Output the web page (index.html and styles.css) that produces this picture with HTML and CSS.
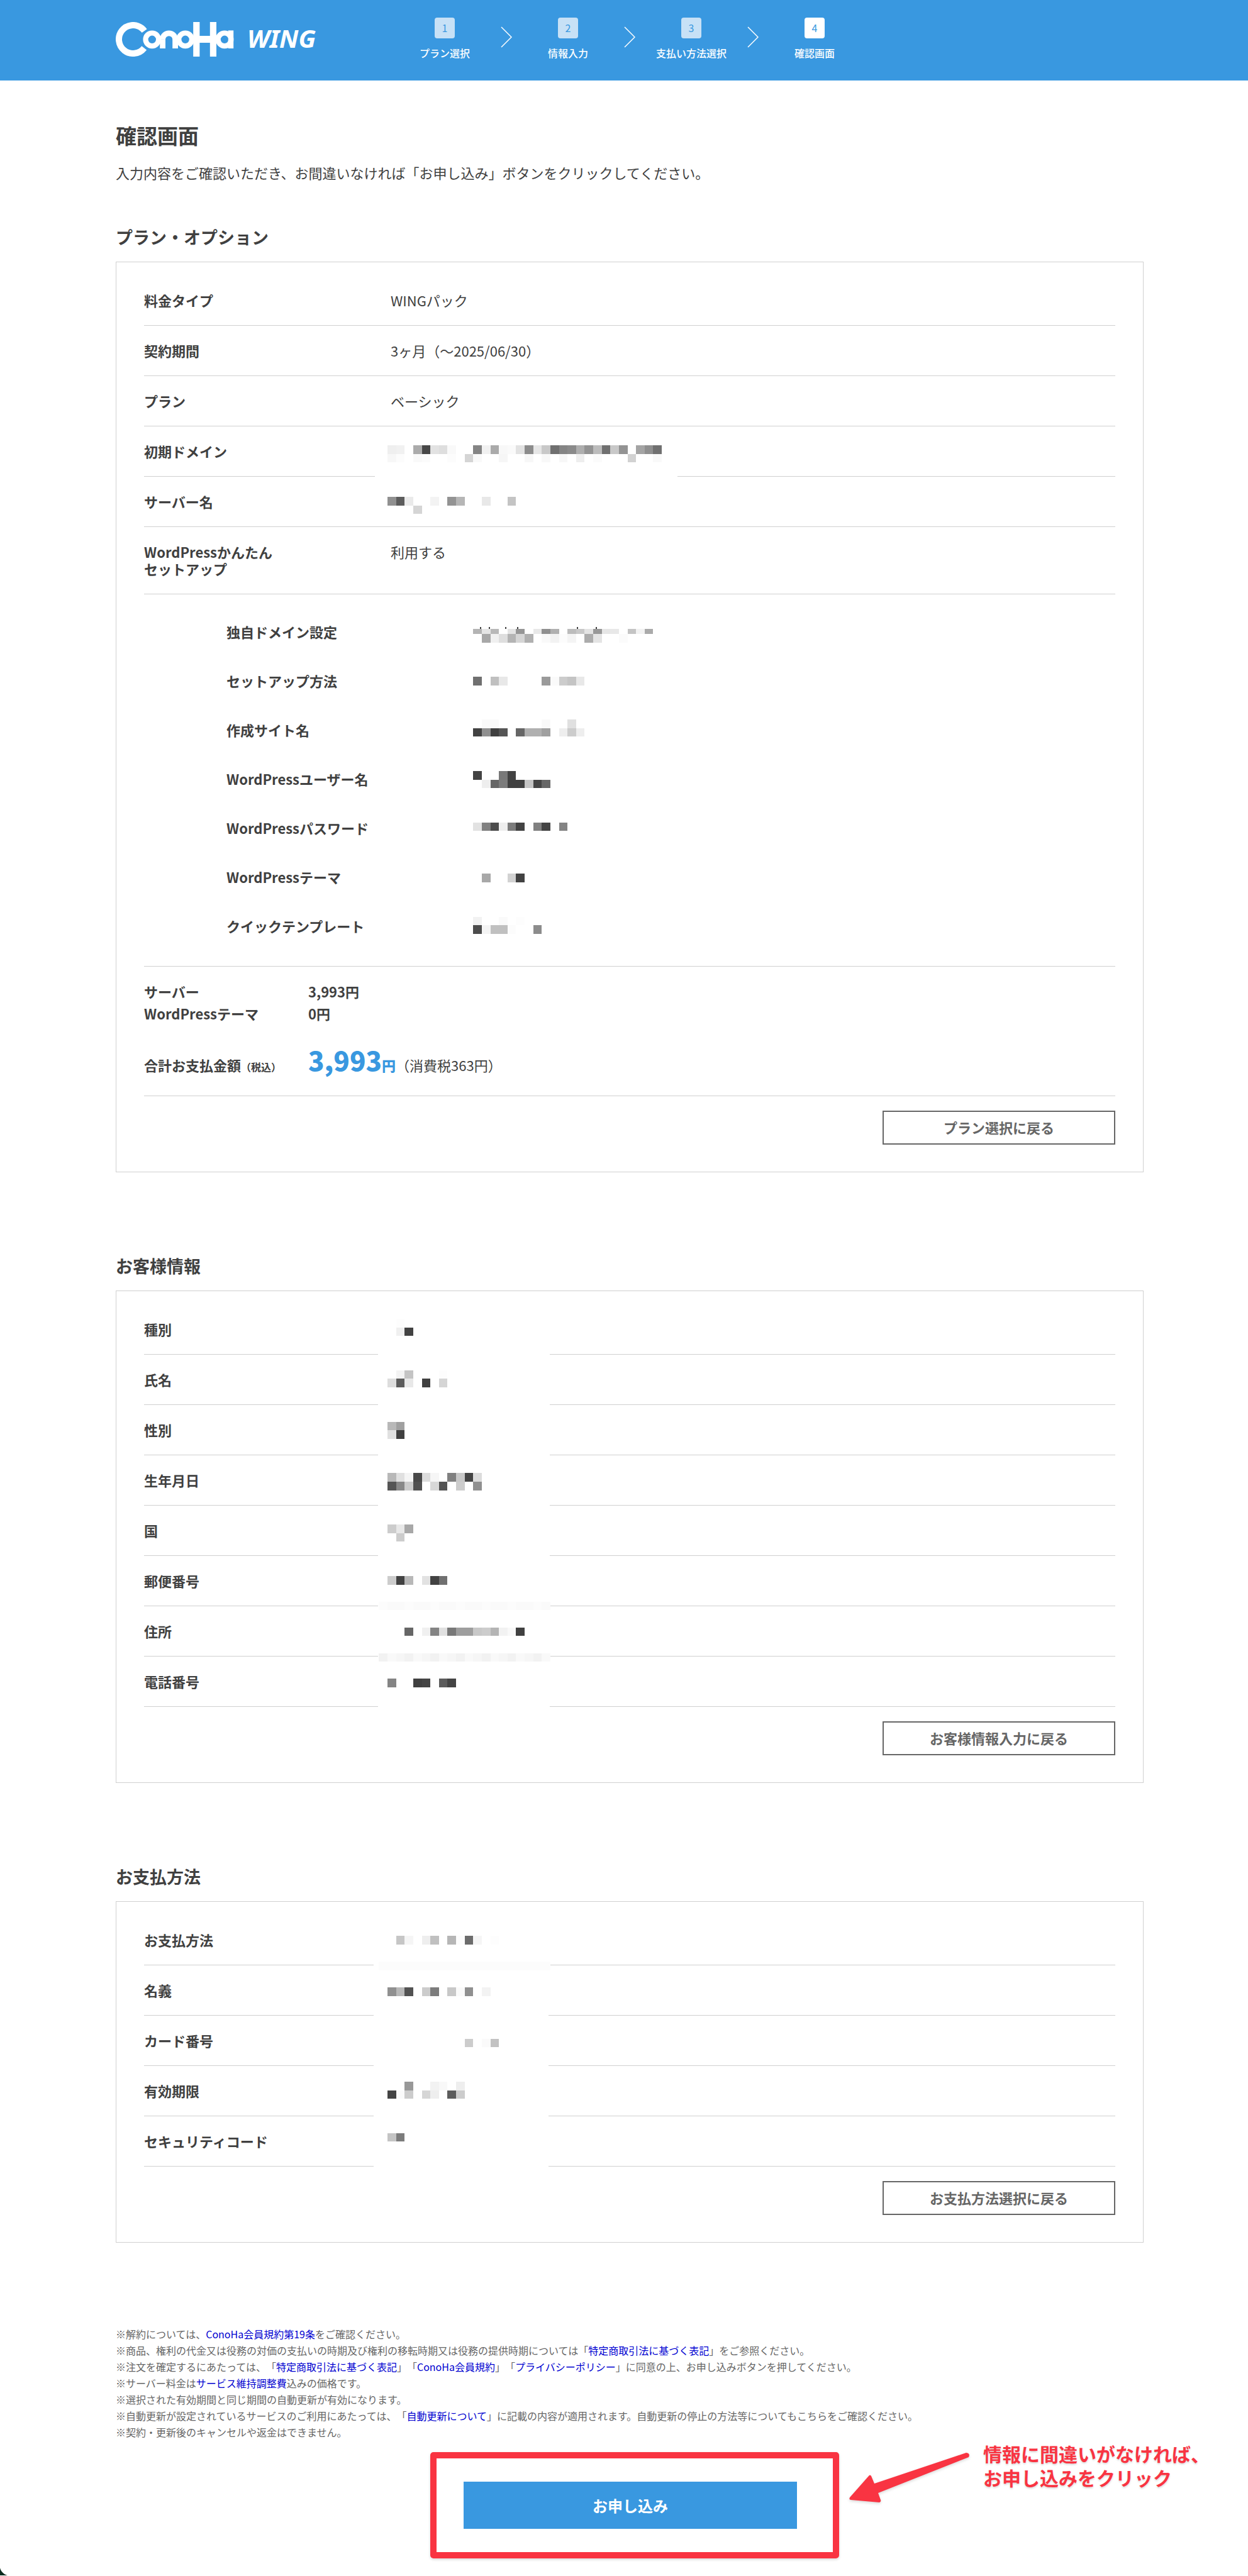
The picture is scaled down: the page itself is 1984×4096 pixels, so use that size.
FILE: index.html
```
<!DOCTYPE html>
<html lang="ja">
  <head>
    <meta charset="utf-8" />
    <title>確認画面 | ConoHa WING</title>
    <meta name="viewport" content="width=device-width, initial-scale=1" />
    <link rel="stylesheet" href="styles.css">
  </head>
  <body>
    <header class="header">
      <div class="logo">
        <svg class="logo-mark" width="188" height="55" viewBox="0 0 188 55" role="img" aria-label="ConoHa">
          <g fill="none" stroke="#fff">
            <circle cx="27.5" cy="27.5" r="22.5" stroke-width="10" stroke-dasharray="111.5 29.9" transform="rotate(38 27.5 27.5)" />
            <circle cx="57.8" cy="27.8" r="10.3" stroke-width="8.2" />
            <circle cx="84.6" cy="27.8" r="10" stroke-width="8.8" stroke-dasharray="31.4 31.4" transform="rotate(180 84.6 27.8)" />
            <circle cx="110.6" cy="27.8" r="10.3" stroke-width="8.2" />
            <circle cx="173" cy="27.8" r="10.3" stroke-width="8.2" />
          </g>
          <g fill="#fff">
            <rect x="70.2" y="27.5" width="8.8" height="14.5" />
            <rect x="90.2" y="27.5" width="8.8" height="14.5" />
            <rect x="123.2" y="0" width="10.2" height="55" />
            <rect x="149.8" y="0" width="10.2" height="55" />
            <rect x="133" y="22" width="17" height="11" />
            <rect x="178.8" y="13.4" width="8.4" height="28.6" />
          </g>
        </svg>
        <span class="logo-text">WING</span>
      </div>
      <ol class="steps">
        <li class="step"><span class="step-num">1</span>プラン選択</li>
        <li class="arrow"><svg width="18" height="34" viewBox="0 0 18 34"><path d="M1 1 L17 17 L1 33" /></svg></li>
        <li class="step"><span class="step-num">2</span>情報入力</li>
        <li class="arrow"><svg width="18" height="34" viewBox="0 0 18 34"><path d="M1 1 L17 17 L1 33" /></svg></li>
        <li class="step"><span class="step-num">3</span>支払い方法選択</li>
        <li class="arrow"><svg width="18" height="34" viewBox="0 0 18 34"><path d="M1 1 L17 17 L1 33" /></svg></li>
        <li class="step active"><span class="step-num">4</span>確認画面</li>
      </ol>
    </header>

    <main class="main">
      <h1>確認画面</h1>
      <p class="lead">入力内容をご確認いただき、お間違いなければ「お申し込み」ボタンをクリックしてください。</p>

      <h2 class="first">プラン・オプション</h2>
      <section class="card">
        <dl class="list">
          <div class="row"><dt>料金タイプ</dt><dd>WINGパック</dd></div>
          <div class="row"><dt>契約期間</dt><dd>3ヶ月（〜2025/06/30）</dd></div>
          <div class="row"><dt>プラン</dt><dd>ベーシック</dd></div>
          <div class="row"><dt>初期ドメイン</dt><dd></dd></div>
          <div class="row"><dt>サーバー名</dt><dd></dd></div>
          <div class="row"><dt>WordPressかんたん<br />セットアップ</dt><dd>利用する</dd></div>
        </dl>
        <dl class="sublist">
          <div class="subrow"><dt>独自ドメイン設定</dt><dd></dd></div>
          <div class="subrow"><dt>セットアップ方法</dt><dd></dd></div>
          <div class="subrow"><dt>作成サイト名</dt><dd></dd></div>
          <div class="subrow"><dt>WordPressユーザー名</dt><dd></dd></div>
          <div class="subrow"><dt>WordPressパスワード</dt><dd></dd></div>
          <div class="subrow"><dt>WordPressテーマ</dt><dd></dd></div>
          <div class="subrow"><dt>クイックテンプレート</dt><dd></dd></div>
        </dl>
        <dl class="prices">
          <div class="price"><dt>サーバー</dt><dd>3,993円</dd></div>
          <div class="price"><dt>WordPressテーマ</dt><dd>0円</dd></div>
          <div class="price total">
            <dt>合計お支払金額<small>（税込）</small></dt>
            <dd><strong>3,993</strong><b>円</b><span>（消費税363円）</span></dd>
          </div>
        </dl>
        <button type="button" class="back">プラン選択に戻る</button>
        <svg class="mosaic mosaic-plan" viewBox="0 0 32 57" id="mosaicPlan"></svg>
      </section>

      <h2>お客様情報</h2>
      <section class="card">
        <dl class="list">
          <div class="row"><dt>種別</dt><dd></dd></div>
          <div class="row"><dt>氏名</dt><dd></dd></div>
          <div class="row"><dt>性別</dt><dd></dd></div>
          <div class="row"><dt>生年月日</dt><dd></dd></div>
          <div class="row"><dt>国</dt><dd></dd></div>
          <div class="row"><dt>郵便番号</dt><dd></dd></div>
          <div class="row"><dt>住所</dt><dd></dd></div>
          <div class="row"><dt>電話番号</dt><dd></dd></div>
        </dl>
        <button type="button" class="back">お客様情報入力に戻る</button>
        <svg class="mosaic mosaic-customer" viewBox="0 0 19 46" id="mosaicCustomer"></svg>
      </section>

      <h2>お支払方法</h2>
      <section class="card">
        <dl class="list">
          <div class="row"><dt>お支払方法</dt><dd></dd></div>
          <div class="row"><dt>名義</dt><dd></dd></div>
          <div class="row"><dt>カード番号</dt><dd></dd></div>
          <div class="row"><dt>有効期限</dt><dd></dd></div>
          <div class="row"><dt>セキュリティコード</dt><dd></dd></div>
        </dl>
        <button type="button" class="back">お支払方法選択に戻る</button>
        <svg class="mosaic mosaic-payment" viewBox="0 0 19 28" id="mosaicPayment"></svg>
      </section>

      <ul class="notes">
        <li>※解約については、<a href="#">ConoHa会員規約第19条</a>をご確認ください。</li>
        <li>※商品、権利の代金又は役務の対価の支払いの時期及び権利の移転時期又は役務の提供時期については「<a href="#">特定商取引法に基づく表記</a>」をご参照ください。</li>
        <li>※注文を確定するにあたっては、「<a href="#">特定商取引法に基づく表記</a>」「<a href="#">ConoHa会員規約</a>」「<a href="#">プライバシーポリシー</a>」に同意の上、お申し込みボタンを押してください。</li>
        <li>※サーバー料金は<a href="#">サービス維持調整費</a>込みの価格です。</li>
        <li>※選択された有効期間と同じ期間の自動更新が有効になります。</li>
        <li>※自動更新が設定されているサービスのご利用にあたっては、「<a href="#">自動更新について</a>」に記載の内容が適用されます。自動更新の停止の方法等についてもこちらをご確認ください。</li>
        <li>※契約・更新後のキャンセルや返金はできません。</li>
      </ul>

      <div class="submit-area">
        <div class="highlight">
          <button type="submit" class="submit">お申し込み</button>
          <div class="callout">
            <svg width="194" height="82" viewBox="0 0 194 82">
              <path d="M187 2 L41 51 L36 39 Q34 36 32 39 L2 73 Q0 77 4 77 L49 81 Q52 80 51 77 L47 66 L191 9 Q194 3 187 2 Z" />
            </svg>
            <p>情報に間違いがなければ、<br />お申し込みをクリック</p>
          </div>
        </div>
      </div>
    </main>

    <script>
      // [row, column, gray levels], "--" leaves the cell empty
      const plan = [
        [0, 0, "ef f1 -- ab 47 e2 de f9 -- -- 84 f1 aa f8 fa e2 8c e6 c8 70 84 8a ae 93 bc 70 c8 93 -- a4 8f 70"],
        [1, 0, "f7 fc -- f9 fb -- -- fc -- d5 f9 -- -- f6 -- -- f7 -- f8 -- f7 -- ee -- fb -- -- -- d2 -- -- f9"],
        [6, 0, "90 5c ea -- -- f3 -- 93 b6 -- -- e8 -- -- c4"],
        [7, 3, "d5"],
        [21.4, 10, "b4 e5 b8 -- e4 96 -- e8 90 b0 -- bc c8 e4 98 e6 e8 -- c4 f2 aa"],
        [22, 11, "a8 f0 de b4 d5 b0 -- f9 f2 fc f4 -- ac e4 -- -- fb"],
        [27, 10, "70 -- c0 e8 -- -- -- -- 9a fa cc c4 e8"],
        [32, 11, "f9 f9 -- -- -- -- -- f9 -- -- e0"],
        [33, 10, "42 90 40 55 -- 66 b0 b0 a0 -- ee cc ee"],
        [38, 10, "42 fd -- 78 42"],
        [39, 11, "ee 66 7c 40 40 c4 44 66"],
        [44, 10, "e2 80 4c ee 7c 42 fc 80 44 -- 84"],
        [50, 11, "a8 -- -- d2 42"],
        [55, 10, "f2 -- -- fa -- fd"],
        [56, 10, "4c f4 c0 c0 fc -- -- 8c"]
      ];
      const customer = [
        [0, 1, "fd"],
        [1, 1, "f0 42"],
        [6, 1, "f3 c4 -- -- -- fd"],
        [7, 0, "dd 5c e8 -- 40 -- d5"],
        [12, 0, "b8 a0"],
        [13, 0, "e0 40"],
        [18, 0, "b8 e0 f4 48 dc f6 -- 80 c8 44 dc"],
        [19, 0, "54 88 cc 50 -- d8 54 -- cc -- 90"],
        [24, 0, "cc e8 a8"],
        [25, 1, "cc"],
        [30, 0, "cc 42 b8 -- e2 42 70"],
        [33, -1, "fc fa fa fc fa fa fc fa fa fc fa fa fc fa fa fc fa fa fc fa"],
        [36, 2, "66 -- f0 84 e0 78 9e 9e c8 cc b4 f2 f9 40"],
        [39, -1, "f2 f9 f6 f2 f9 f6 f2 f9 f6 f2 f9 f6 f2 f9 f6 f2 f9 f6 f2 f9"],
        [42, 0, "84 -- -- 40 44 -- 5c 44"]
      ];
      const payment = [
        [0, 1, "c6 f5 -- ee c0 -- b6 fc 6c f5 -- fd"],
        [3, -1, "fc fc fc fc fc fc fc fc fc fc fc fc fc fc fc fc fc fc fc fc"],
        [6, 0, "90 b8 52 -- cc 7c -- c8 fa 90 -- f3"],
        [12, 9, "cc -- fa c2"],
        [17, 2, "98 -- -- f2 f8 -- ee"],
        [18, 0, "44 fa cc -- d6 ee -- 5c cc"],
        [23, 0, "c4 7c"]
      ];

      function addRect(svg, x, y, w, h, color) {
        const r = document.createElementNS("http://www.w3.org/2000/svg", "rect");
        r.setAttribute("x", x);
        r.setAttribute("y", y);
        r.setAttribute("width", w);
        r.setAttribute("height", h);
        r.setAttribute("fill", color);
        svg.appendChild(r);
      }

      function drawMosaic(id, mask, rows) {
        const svg = document.getElementById(id);
        // white area first, it hides the row borders
        addRect(svg, mask[0], mask[1], mask[2], mask[3], "#fff");
        rows.forEach(function (row) {
          const height = Math.ceil(row[0] + 0.01) - row[0];
          row[2].split(" ").forEach(function (gray, i) {
            if (gray != "--") {
              addRect(svg, row[1] + i, row[0], 1, height, "#" + gray + gray + gray);
            }
          });
        });
      }

      drawMosaic("mosaicPlan", [-1.5, 3, 35.3, 1.4], plan);
      drawMosaic("mosaicCustomer", [-1.1, 0, 20, 46], customer);
      drawMosaic("mosaicPayment", [-1.6, 0, 20.4, 28], payment);

      // tips of the letters above the domain mosaic
      [10.8, 11.8, 13.7, 15.1, 22.1, 24.3].forEach(function (x) {
        addRect(document.getElementById("mosaicPlan"), x, 21.2, 0.15, 0.2, "#404040");
      });
    </script>
  </body>
</html>
```
FILE: styles.css
```
* {
  box-sizing: border-box;
}
body {
  position: relative;
  margin: 0;
  font-family: "Noto Sans CJK JP", "Noto Sans", sans-serif;
  font-size: 22px;
  line-height: 27px;
  text-spacing-trim: space-all;
  color: #404040;
  background-color: #fff;
}
/* dark rounded corner of the window */
body::after {
  content: "";
  position: absolute;
  left: 0;
  bottom: 0;
  width: 16px;
  height: 16px;
  background: radial-gradient(circle at top right, transparent 16px, #0b2a1d 17px);
}
h1, h2, p, dl, dd, ol, ul {
  margin: 0;
  padding: 0;
}
ol, ul {
  list-style: none;
}
button {
  font-family: inherit;
  cursor: pointer;
}

/* Header */
.header {
  display: flex;
  height: 128px;
  padding-left: 184px;
  color: #fff;
  background-color: #3998e0;
}
.logo {
  display: flex;
  align-items: center;
  width: 434px;
  height: 125px;
}
.logo-text {
  margin-left: 21px;
  padding-bottom: 4px;
  font-family: "Noto Sans", sans-serif;
  font-size: 40px;
  font-style: italic;
  font-weight: bold;
}
.steps {
  display: flex;
  padding-top: 28px;
}
.step {
  display: flex;
  flex-direction: column;
  align-items: center;
  gap: 11px;
  width: 178px;
  font-size: 16px;
  line-height: 24px;
  font-weight: 500;
}
.step-num {
  width: 32px;
  height: 33px;
  border-radius: 4px;
  line-height: 33px;
  font-weight: 400;
  text-align: center;
  color: #3998e0;
  background-color: #c7e1f6;
}
.step.active .step-num {
  background-color: #fff;
}
.arrow {
  padding-top: 14px;
}
.arrow path {
  fill: none;
  stroke: #fff;
  stroke-width: 1.5;
}

/* Page */
.main {
  padding: 63px 166px 27px 184px;
}
h1 {
  font-size: 33px;
  line-height: 48px;
}
.lead {
  margin-top: 18px;
  line-height: 34px;
}
h2 {
  margin-top: 129px;
  font-size: 27px;
  line-height: 40px;
}
h2.first {
  margin-top: 66px;
}
.card {
  position: relative;
  display: flex;
  flex-direction: column;
  margin-top: 19px;
  padding: 21px 44px 43px;
  border: 1px solid #d0d0d0;
}
dt {
  font-weight: bold;
}
.row {
  display: flex;
  padding: 26px 0;
  border-bottom: 1px solid #d0d0d0;
}
.row dt {
  width: 392px;
}
.sublist {
  padding: 20px 0 25px 131px;
  border-bottom: 1px solid #d0d0d0;
}
.subrow {
  display: flex;
  padding: 26px 0 25px;
}
.prices {
  padding: 22px 0 16px;
  border-bottom: 1px solid #d0d0d0;
}
.price {
  display: flex;
  align-items: baseline;
  line-height: 35px;
}
.price dt {
  width: 261px;
}
.price dd {
  font-weight: bold;
}
.total {
  padding-top: 26px;
  line-height: 60px;
}
.total small {
  font-size: 16px;
}
.total strong {
  font-size: 42px;
  color: #3998e0;
}
.total b {
  color: #3998e0;
}
.total span {
  font-weight: 400;
}
.back {
  align-self: flex-end;
  width: 370px;
  height: 54px;
  margin-top: 23px;
  padding-bottom: 3px;
  border: 2px solid #666;
  font-size: 22px;
  font-weight: bold;
  color: #666;
  background-color: #fff;
}

/* Hidden personal data */
.mosaic {
  position: absolute;
  left: 431px;
  overflow: visible;
  shape-rendering: crispEdges;
}
.mosaic-plan {
  top: 291px;
  width: 436px;
  height: 777px;
}
.mosaic-customer {
  top: 44px;
  width: 259px;
  height: 627px;
}
.mosaic-payment {
  top: 54px;
  width: 259px;
  height: 382px;
}

.notes {
  margin-top: 132px;
  font-size: 16px;
  line-height: 26px;
  color: #666;
}
.notes a {
  color: #0000d0;
  text-decoration: none;
}

/* Submit */
.submit-area {
  display: flex;
  justify-content: center;
  margin-top: 19px;
  padding-left: 16px;
}
.highlight {
  position: relative;
  width: 650px;
  padding: 37px 57px 37px 43px;
  border: 10px solid #f93442;
  border-radius: 5px;
  box-shadow: 0 2px 4px rgba(0, 0, 0, 0.15);
}
.submit {
  display: block;
  width: 100%;
  height: 75px;
  border: none;
  font-size: 24px;
  font-weight: bold;
  color: #fff;
  background-color: #3998e0;
}
.callout {
  position: absolute;
  left: 655px;
  top: -27px;
  display: flex;
  gap: 20px;
}
.callout svg {
  flex: none;
  margin-top: 16px;
  fill: #f93442;
  filter: drop-shadow(0 2px 2px rgba(0, 0, 0, 0.15));
}
.callout p {
  font-size: 30px;
  line-height: 38px;
  font-weight: bold;
  white-space: nowrap;
  color: #f93442;
  text-shadow: 0 2px 3px rgba(0, 0, 0, 0.15);
}
```
